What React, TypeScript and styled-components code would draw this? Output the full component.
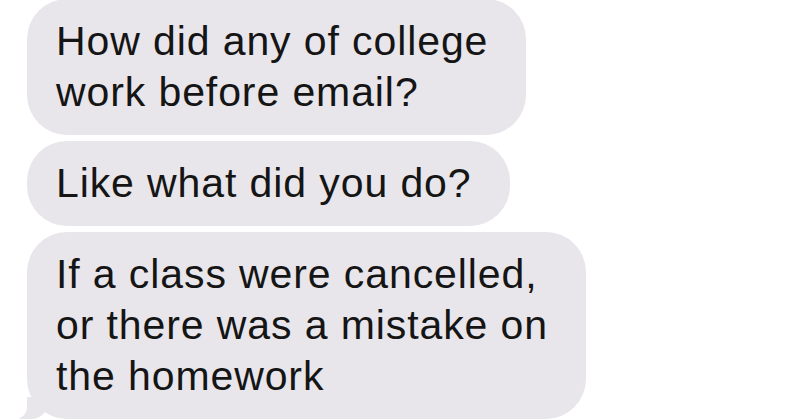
import React from "react";
import styled, { createGlobalStyle } from "styled-components";

const Global = createGlobalStyle`
  html, body { margin: 0; padding: 0; background: #ffffff; }
  body { width: 800px; height: 420px; overflow: hidden; }
`;

const Thread = styled.div`
  display: flex;
  flex-direction: column;
  align-items: flex-start;
  gap: 6px;
  padding: 0 0 0 27px;
  margin-top: -1px;
  font-family: "Liberation Sans", Arial, Helvetica, sans-serif;
`;

const Bubble = styled.div<{ $tail?: boolean }>`
  position: relative;
  background: #e8e6eb;
  color: #151515;
  font-size: 41px;
  line-height: 51px;
  letter-spacing: 0.9px;
  padding: 17px 38px 17px 29px;
  border-radius: 40px;
  ${(p) =>
    p.$tail &&
    `
    &::before {
      content: "";
      position: absolute;
      left: -8px;
      bottom: 0;
      width: 28px;
      height: 22px;
      background: #e8e6eb;
      border-bottom-right-radius: 16px 14px;
    }
    &::after {
      content: "";
      position: absolute;
      left: -18px;
      bottom: 0;
      width: 18px;
      height: 24px;
      background: #ffffff;
      border-bottom-right-radius: 12px 12px;
    }
  `}
`;

export default function App() {
  return (
    <>
      <Global />
      <Thread>
        <Bubble>
          How did any of college
          <br />
          work before email?
        </Bubble>
        <Bubble>Like what did you do?</Bubble>
        <Bubble $tail>
          If a class were cancelled,
          <br />
          or there was a mistake on
          <br />
          the homework
        </Bubble>
      </Thread>
    </>
  );
}
